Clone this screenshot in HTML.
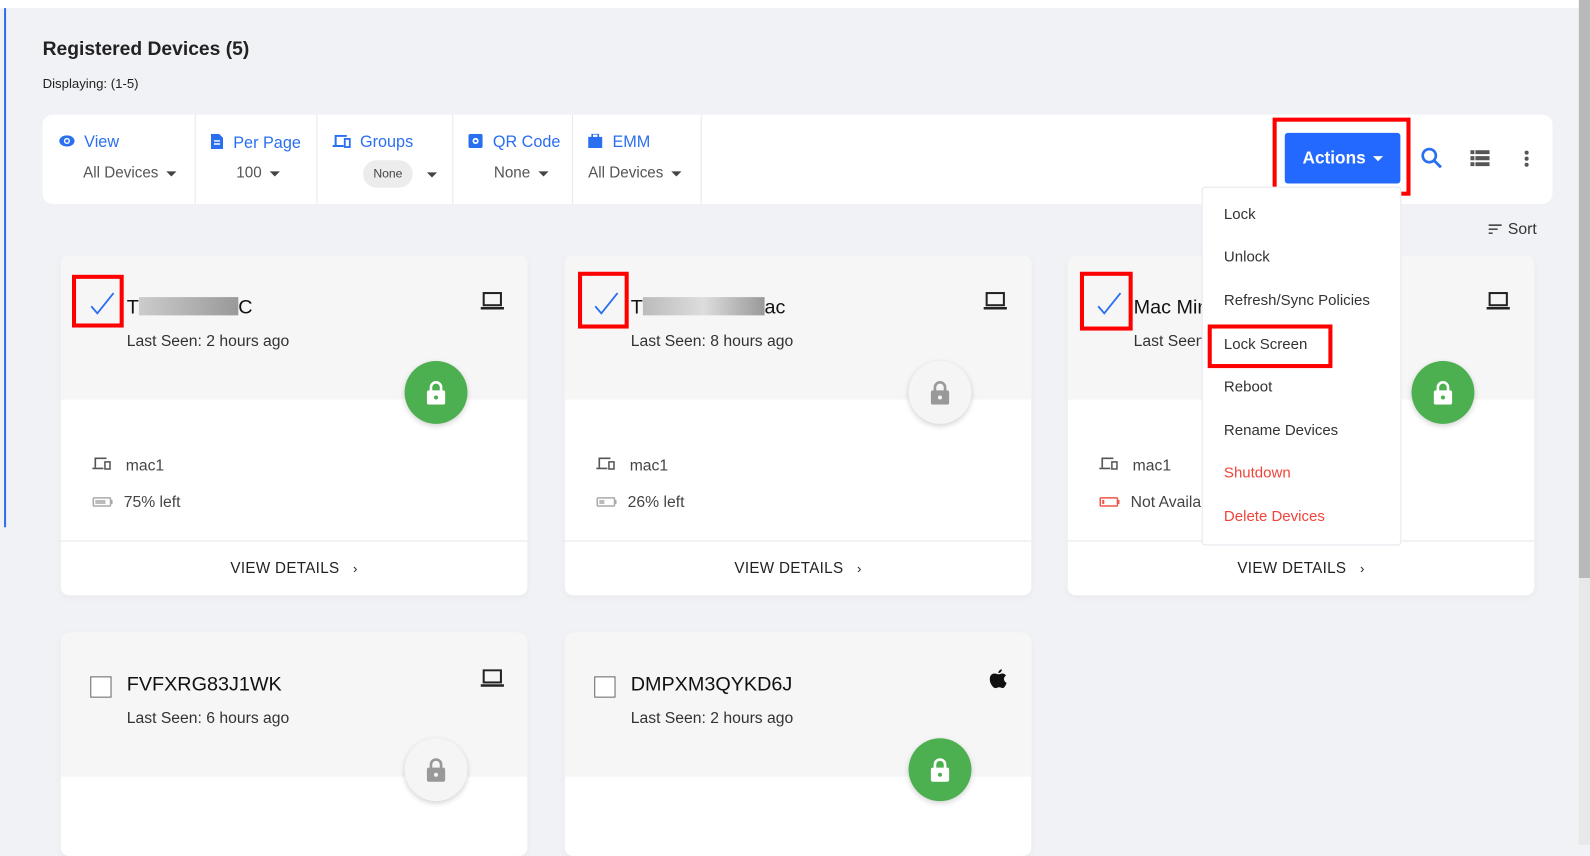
<!DOCTYPE html>
<html><head><style>
*{box-sizing:border-box;margin:0;padding:0}
body{width:1590px;height:833px;overflow:hidden;background:#f1f2f5;font-family:"Liberation Sans",sans-serif;color:#222}
#w{position:absolute;left:0;top:0;width:1568px;height:822px;transform:scale(1.01403);transform-origin:0 0}
.abs{position:absolute}
.topbar{left:0;top:0;width:1568px;height:8px;background:#fff}
.bl{left:4px;top:8px;width:2px;height:512px;background:#2f6ef0}
.sb{left:1557px;top:0;width:11px;height:570px;background:#b9b9b9}
.sbt{left:1557px;top:570px;width:11px;height:263px;background:#e8e8e8}
h1{position:absolute;left:42px;top:38px;font-size:19px;font-weight:bold;color:#222}
.disp{left:42px;top:75px;font-size:13px;color:#222}
.tb{left:42px;top:113px;width:1489px;height:88px;background:#fff;border-radius:10px}
.sec{position:absolute;top:0;height:88px;border-right:1px solid #e8e8e8}
.lab{position:absolute;top:19px;font-size:16px;color:#2a6ff0;white-space:nowrap}
.val{position:absolute;top:49px;font-size:15px;color:#555;white-space:nowrap}
.car{display:inline-block;width:0;height:0;border-left:5px solid transparent;border-right:5px solid transparent;border-top:5px solid #444;vertical-align:middle;margin-left:8px}
.card{position:absolute;width:460px;background:#fff;border-radius:8px;overflow:hidden;box-shadow:0 2px 8px rgba(0,0,0,.04)}
.ch{height:142px;background:#f6f6f7;position:relative}
.nm{position:absolute;left:65px;top:40px;font-size:19.5px;color:#111}
.ls{position:absolute;left:65px;top:76px;font-size:15.5px;color:#333}
.lk{position:absolute;width:62px;height:62px;border-radius:50%;left:339px;top:104px;display:flex;align-items:center;justify-content:center;box-shadow:0 2px 6px rgba(0,0,0,.18)}
.g{background:#4caf50}.w{background:#f5f5f5}
.row{position:absolute;left:31px;font-size:15.5px;color:#444}
.vd{position:absolute;left:0;top:281px;width:460px;border-top:1px solid #e6e6e6;height:54px;text-align:center;line-height:54px;font-size:15px;color:#222;letter-spacing:.3px}
.cb{position:absolute;left:29px;top:43px;width:21px;height:21px;border:1.5px solid #666;background:#fff}
.red{position:absolute;border:4px solid #f00}
.menu{left:1185px;top:184px;width:197px;height:354px;background:#fff;border:1px solid #e3e6ee;border-radius:4px}
.mi{position:absolute;left:21px;font-size:14.8px;color:#333}
</style></head><body><div id="w">
<div class="abs topbar"></div><div class="abs bl"></div><div class="abs sb"></div><div class="abs sbt"></div>
<h1>Registered Devices (5)</h1>
<div class="abs disp">Displaying: (1-5)</div>
<div class="abs tb">
 <div class="sec" style="left:0;width:151px">
  <div class="lab" style="left:16px"><svg width="16" height="14" viewBox="0 0 16 14" style="vertical-align:-1px;margin-right:9px"><ellipse cx="8" cy="7" rx="7.5" ry="5.5" fill="#2a6ff0"/><circle cx="8" cy="7" r="3" fill="#fff"/><circle cx="8" cy="7" r="1.6" fill="#2a6ff0"/></svg>View</div>
  <div class="val" style="left:40px">All Devices<span class="car"></span></div></div>
 <div class="sec" style="left:151px;width:120px">
  <div class="lab" style="left:15px"><svg width="12" height="15" viewBox="0 0 12 15" style="vertical-align:-1px;margin-right:10px"><path d="M0 0h8l4 4v11H0z" fill="#2a6ff0"/><path d="M3 7h6M3 10h6" stroke="#fff" stroke-width="1.4"/></svg>Per Page</div>
  <div class="val" style="left:40px">100<span class="car"></span></div></div>
 <div class="sec" style="left:271px;width:134px">
  <div class="lab" style="left:15px"><svg width="18" height="13" viewBox="0 0 18 13" style="vertical-align:-1px;margin-right:9px"><path d="M3 10V1h11M0 11h11" stroke="#2a6ff0" stroke-width="2" fill="none"/><rect x="12" y="4" width="5" height="8" stroke="#2a6ff0" stroke-width="1.8" fill="none"/></svg>Groups</div>
  <div style="position:absolute;left:45px;top:45px;width:49px;height:27px;border-radius:14px;background:#ececec;font-size:12px;color:#444;text-align:center;line-height:27px">None</div>
  <div class="car" style="position:absolute;left:100px;top:57px"></div></div>
 <div class="sec" style="left:405px;width:118px">
  <div class="lab" style="left:15px"><svg width="14" height="14" viewBox="0 0 14 14" style="vertical-align:-1px;margin-right:10px"><rect width="14" height="14" rx="2" fill="#2a6ff0"/><circle cx="7" cy="7" r="3" fill="#fff"/><circle cx="7" cy="7" r="1.3" fill="#2a6ff0"/></svg>QR Code</div>
  <div class="val" style="left:40px">None<span class="car"></span></div></div>
 <div class="sec" style="left:523px;width:127px">
  <div class="lab" style="left:15px"><svg width="14" height="14" viewBox="0 0 14 14" style="vertical-align:-1px;margin-right:10px"><rect y="3" width="14" height="11" fill="#2a6ff0"/><rect x="4" y="0" width="6" height="4" fill="none" stroke="#2a6ff0" stroke-width="1.6"/></svg>EMM</div>
  <div class="val" style="left:15px">All Devices<span class="car"></span></div></div>
 <div style="position:absolute;left:1225px;top:18px;width:114px;height:50px;background:#2469ff;border-radius:3px;color:#fff;font-weight:bold;font-size:17px;text-align:center;line-height:50px">Actions <span class="car" style="border-top-color:#fff;margin-left:2px"></span></div>
 <svg style="position:absolute;left:1359px;top:32px" width="22" height="22" viewBox="0 0 22 22"><circle cx="8.5" cy="8.5" r="6.5" stroke="#2a6ff0" stroke-width="2.6" fill="none"/><path d="M13.5 13.5l6.5 6.5" stroke="#2a6ff0" stroke-width="2.8"/></svg>
 <svg style="position:absolute;left:1408px;top:35px" width="19" height="16" viewBox="0 0 19 16"><path d="M0 0h4v4H0zM5 0h14v4H5zM0 6h4v4H0zM5 6h14v4H5zM0 12h4v4H0zM5 12h14v4H5z" fill="#555"/></svg>
 <svg style="position:absolute;left:1461px;top:35px" width="5" height="17" viewBox="0 0 5 17"><circle cx="2.5" cy="2.5" r="2" fill="#555"/><circle cx="2.5" cy="8.5" r="2" fill="#555"/><circle cx="2.5" cy="14.5" r="2" fill="#555"/></svg>
</div>
<div class="red" style="left:1255px;top:116px;width:136px;height:77px"></div>
<div class="abs" style="left:1468px;top:218px;font-size:15.5px;color:#333"><svg width="13" height="10" viewBox="0 0 13 10" style="margin-right:6px"><path d="M0 1h13M0 5h9M0 9h4" stroke="#333" stroke-width="1.4"/></svg>Sort</div>

<div class="card" style="left:60px;top:252px;height:335px">
 <div class="ch">
 <svg style="position:absolute;left:28px;top:35px" width="26" height="24" viewBox="0 0 26 24"><path d="M2 15l6 7L24 2" stroke="#2a6ff0" stroke-width="1.8" fill="none"/></svg>
 <div class="nm">T<span style="display:inline-block;width:98px;height:18px;background:linear-gradient(90deg,#ccc,#999);vertical-align:-2px"></span>C</div>
 <div class="ls">Last Seen: 2 hours ago</div>
 <svg style="position:absolute;left:414px;top:36px" width="23" height="18" viewBox="0 0 23 18"><rect x="3" y="1" width="17" height="12" fill="none" stroke="#222" stroke-width="2"/><path d="M0 16h23" stroke="#222" stroke-width="2.5"/></svg>
 <div class="lk g"><svg width="20" height="24" viewBox="0 0 20 24"><path d="M5 11V7a5 5 0 0 1 10 0v4" stroke="#fff" stroke-width="2.6" fill="none"/><rect x="1" y="10" width="18" height="14" rx="2" fill="#fff"/><circle cx="10" cy="17" r="2" fill="#4caf50"/></svg></div></div>
 <div class="row" style="top:199px"><svg width="19" height="13" viewBox="0 0 19 13" style="margin-right:14px"><path d="M3 10V1h11M0 11h11" stroke="#555" stroke-width="1.6" fill="none"/><rect x="12.5" y="4.5" width="5" height="7" stroke="#555" stroke-width="1.5" fill="none"/></svg>mac1</div>
 <div class="row" style="top:235px"><svg width="21" height="10" viewBox="0 0 21 10" style="margin-right:10px"><rect x="1" y="1" width="17" height="8" rx="1" fill="none" stroke="#aaa" stroke-width="1.5"/><rect x="3" y="3" width="10" height="4" fill="#bbb"/><rect x="18" y="3" width="2" height="4" fill="#aaa"/></svg>75% left</div>
 <div class="vd">VIEW DETAILS &nbsp;&nbsp;<span style="font-size:13px">&#x203A;</span></div>
</div>

<div class="card" style="left:557px;top:252px;height:335px">
 <div class="ch">
 <svg style="position:absolute;left:28px;top:35px" width="26" height="24" viewBox="0 0 26 24"><path d="M2 15l6 7L24 2" stroke="#2a6ff0" stroke-width="1.8" fill="none"/></svg>
 <div class="nm">T<span style="display:inline-block;width:120px;height:18px;background:linear-gradient(90deg,#bbb,#ddd,#999);vertical-align:-2px"></span>ac</div>
 <div class="ls">Last Seen: 8 hours ago</div>
 <svg style="position:absolute;left:413px;top:36px" width="23" height="18" viewBox="0 0 23 18"><rect x="3" y="1" width="17" height="12" fill="none" stroke="#222" stroke-width="2"/><path d="M0 16h23" stroke="#222" stroke-width="2.5"/></svg>
 <div class="lk w"><svg width="20" height="24" viewBox="0 0 20 24"><path d="M5 11V7a5 5 0 0 1 10 0v4" stroke="#999" stroke-width="2.6" fill="none"/><rect x="1" y="10" width="18" height="14" rx="2" fill="#999"/><circle cx="10" cy="17" r="2" fill="#f5f5f5"/></svg></div></div>
 <div class="row" style="top:199px"><svg width="19" height="13" viewBox="0 0 19 13" style="margin-right:14px"><path d="M3 10V1h11M0 11h11" stroke="#555" stroke-width="1.6" fill="none"/><rect x="12.5" y="4.5" width="5" height="7" stroke="#555" stroke-width="1.5" fill="none"/></svg>mac1</div>
 <div class="row" style="top:235px"><svg width="21" height="10" viewBox="0 0 21 10" style="margin-right:10px"><rect x="1" y="1" width="17" height="8" rx="1" fill="none" stroke="#aaa" stroke-width="1.5"/><rect x="3" y="3" width="5" height="4" fill="#bbb"/><rect x="18" y="3" width="2" height="4" fill="#aaa"/></svg>26% left</div>
 <div class="vd">VIEW DETAILS &nbsp;&nbsp;<span style="font-size:13px">&#x203A;</span></div>
</div>

<div class="card" style="left:1053px;top:252px;height:335px">
 <div class="ch">
 <svg style="position:absolute;left:28px;top:35px" width="26" height="24" viewBox="0 0 26 24"><path d="M2 15l6 7L24 2" stroke="#2a6ff0" stroke-width="1.8" fill="none"/></svg>
 <div class="nm">Mac Mini</div>
 <div class="ls">Last Seen</div>
 <svg style="position:absolute;left:413px;top:36px" width="23" height="18" viewBox="0 0 23 18"><rect x="3" y="1" width="17" height="12" fill="none" stroke="#222" stroke-width="2"/><path d="M0 16h23" stroke="#222" stroke-width="2.5"/></svg>
 <div class="lk g"><svg width="20" height="24" viewBox="0 0 20 24"><path d="M5 11V7a5 5 0 0 1 10 0v4" stroke="#fff" stroke-width="2.6" fill="none"/><rect x="1" y="10" width="18" height="14" rx="2" fill="#fff"/><circle cx="10" cy="17" r="2" fill="#4caf50"/></svg></div></div>
 <div class="row" style="top:199px"><svg width="19" height="13" viewBox="0 0 19 13" style="margin-right:14px"><path d="M3 10V1h11M0 11h11" stroke="#555" stroke-width="1.6" fill="none"/><rect x="12.5" y="4.5" width="5" height="7" stroke="#555" stroke-width="1.5" fill="none"/></svg>mac1</div>
 <div class="row" style="top:235px"><svg width="21" height="10" viewBox="0 0 21 10" style="margin-right:10px"><rect x="1" y="1" width="17" height="8" rx="1" fill="none" stroke="#f05545" stroke-width="1.5"/><rect x="3" y="3" width="2" height="4" fill="#f05545"/><rect x="18" y="3" width="2" height="4" fill="#f05545"/></svg>Not Available</div>
 <div class="vd">VIEW DETAILS &nbsp;&nbsp;<span style="font-size:13px">&#x203A;</span></div>
</div>

<div class="card" style="left:60px;top:624px;height:220px">
 <div class="ch"><div class="cb"></div>
 <div class="nm">FVFXRG83J1WK</div>
 <div class="ls">Last Seen: 6 hours ago</div>
 <svg style="position:absolute;left:414px;top:36px" width="23" height="18" viewBox="0 0 23 18"><rect x="3" y="1" width="17" height="12" fill="none" stroke="#222" stroke-width="2"/><path d="M0 16h23" stroke="#222" stroke-width="2.5"/></svg>
 <div class="lk w"><svg width="20" height="24" viewBox="0 0 20 24"><path d="M5 11V7a5 5 0 0 1 10 0v4" stroke="#999" stroke-width="2.6" fill="none"/><rect x="1" y="10" width="18" height="14" rx="2" fill="#999"/><circle cx="10" cy="17" r="2" fill="#f5f5f5"/></svg></div></div>
</div>

<div class="card" style="left:557px;top:624px;height:220px">
 <div class="ch"><div class="cb"></div>
 <div class="nm">DMPXM3QYKD6J</div>
 <div class="ls">Last Seen: 2 hours ago</div>
 <svg style="position:absolute;left:419px;top:36px" width="18" height="20" viewBox="0 0 18 20"><path d="M12 0c0 2-1.5 3.8-3.5 3.8C8.5 2 10 .2 12 0zM9 5c1.2 0 2.2-.8 3.5-.8 1.5 0 2.8.8 3.6 2-3 1.7-2.5 6 .6 7.2-.8 2.4-2.3 5.2-4 5.2-1.3 0-1.7-.8-3.3-.8s-2.1.8-3.4.8C3.2 18.6 0 13.6 0 9.8 0 6.4 2.2 4.2 4.6 4.2 6.2 4.2 7.8 5 9 5z" fill="#111"/></svg>
 <div class="lk g"><svg width="20" height="24" viewBox="0 0 20 24"><path d="M5 11V7a5 5 0 0 1 10 0v4" stroke="#fff" stroke-width="2.6" fill="none"/><rect x="1" y="10" width="18" height="14" rx="2" fill="#fff"/><circle cx="10" cy="17" r="2" fill="#4caf50"/></svg></div></div>
</div>

<div class="red" style="left:71px;top:271px;width:51px;height:52px"></div>
<div class="red" style="left:570px;top:268px;width:50px;height:56px"></div>
<div class="red" style="left:1065px;top:268px;width:52px;height:58px"></div>

<div class="abs menu">
 <div class="mi" style="top:19px">Lock</div>
 <div class="mi" style="top:61px">Unlock</div>
 <div class="mi" style="top:104px">Refresh/Sync Policies</div>
 <div class="mi" style="top:147px">Lock Screen</div>
 <div class="mi" style="top:189px">Reboot</div>
 <div class="mi" style="top:232px">Rename Devices</div>
 <div class="mi" style="top:274px;color:#f0443a">Shutdown</div>
 <div class="mi" style="top:317px;color:#f0443a">Delete Devices</div>
</div>
<div class="red" style="left:1191px;top:320px;width:123px;height:43px"></div>
</div></body></html>
